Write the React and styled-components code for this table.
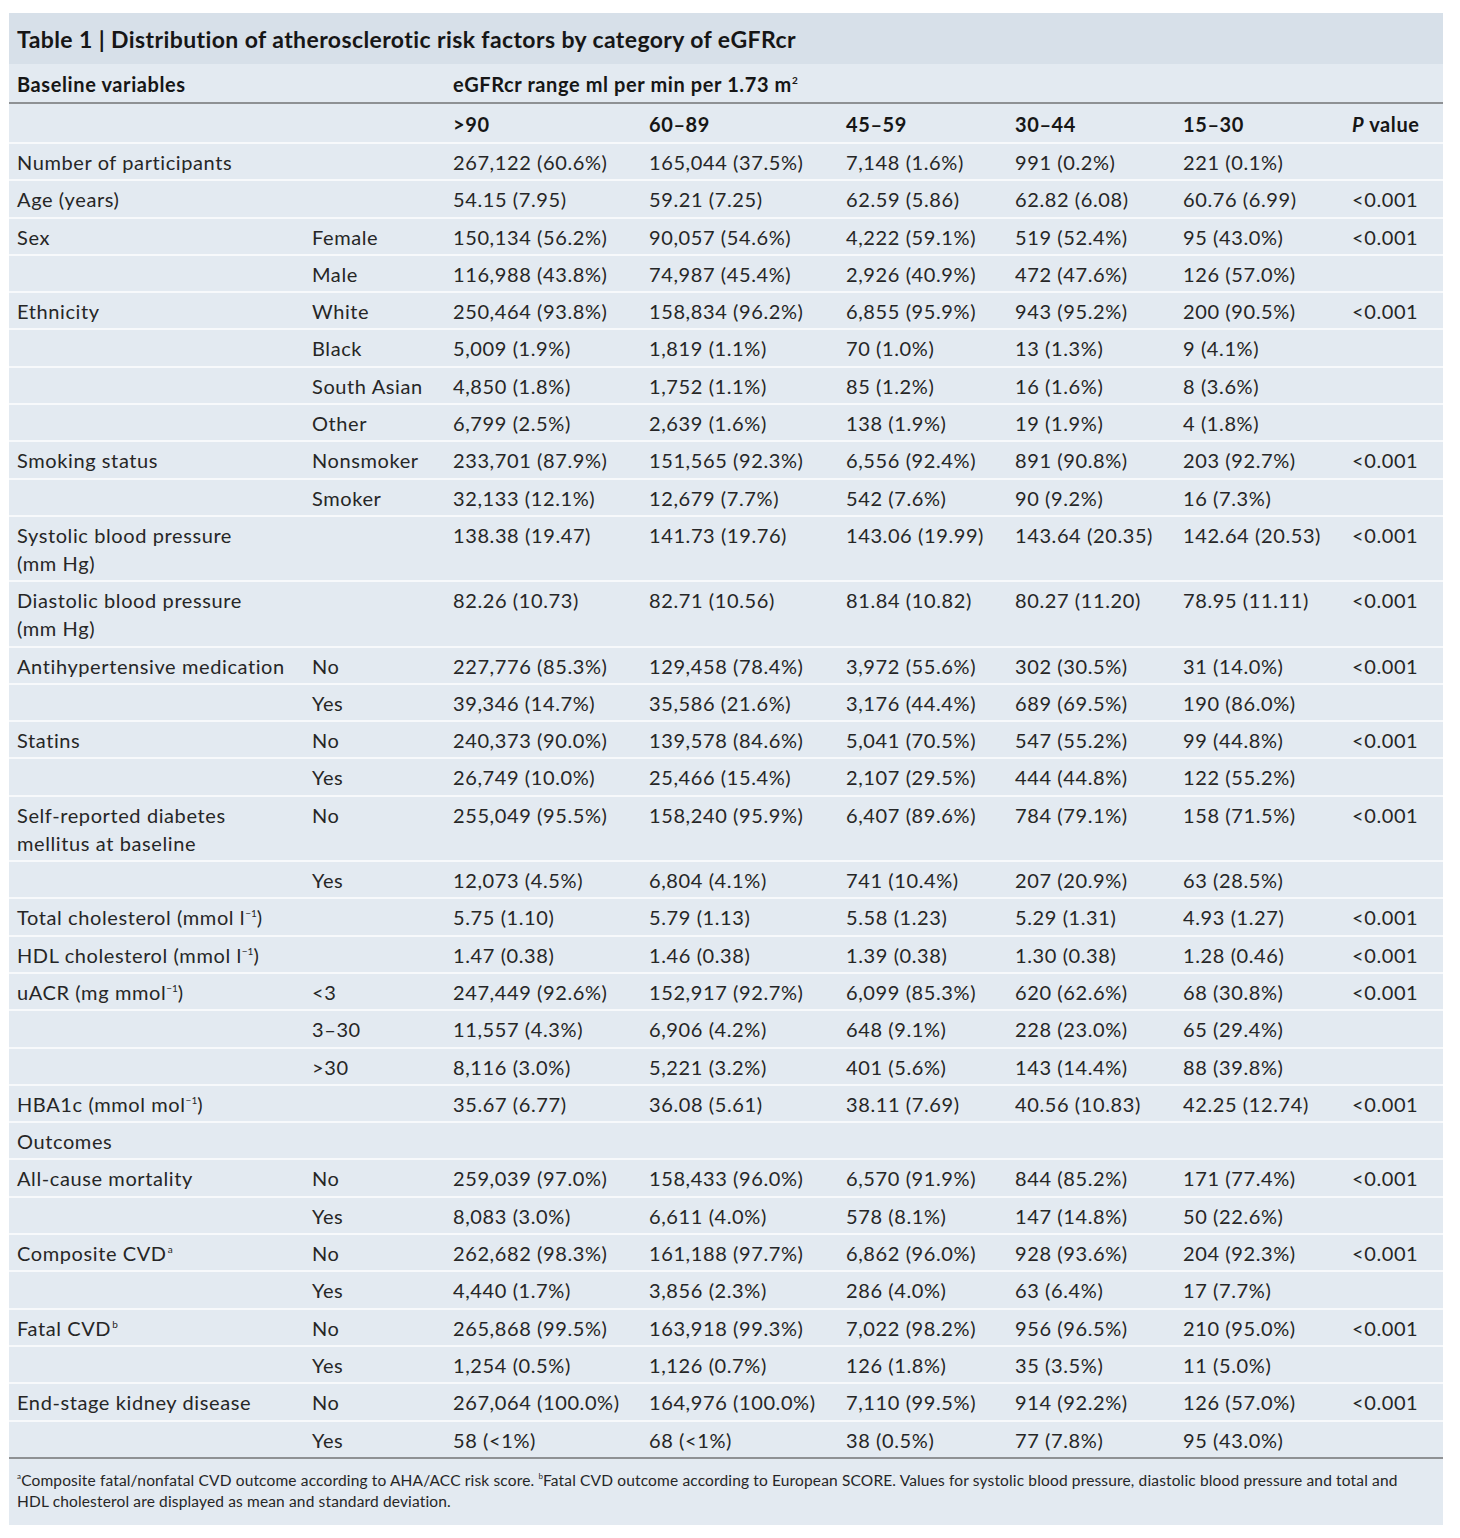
import React from 'react';
import styled, { createGlobalStyle } from 'styled-components';

const GlobalStyle = createGlobalStyle`
  body {
    margin: 0;
    background: #ffffff;
    font-family: Lato, "Open Sans", sans-serif;
    color: #262626;
  }
`;

const COLS = '295px 141px 196px 197px 169px 168px 169px 99px';

const Panel = styled.div`
  width: 1434px;
  margin: 13px 0 0 9px;
  background: #e3eaf1;
`;

const TitleBar = styled.div`
  background: #d7e0e9;
  height: 51px;
  padding: 0 8px;
  display: flex;
  align-items: center;
  font-size: 23px;
  letter-spacing: 0.4px;
  font-weight: 700;
  color: #161616;
`;

const Row = styled.div`
  display: grid;
  grid-template-columns: ${COLS};
  border-top: ${p => (p.$first ? 'none' : p.$rule ? '2px solid #8e9194' : '2px solid #f7f9fb')};
  padding: ${p => (p.$head ? '6px 0 4px' : '4px 0 3.3px')};
  font-weight: ${p => (p.$bold ? 700 : 400)};
  color: ${p => (p.$bold ? '#161616' : '#262626')};
`;

const Cell = styled.div`
  padding-left: 8px;
  font-size: 20px;
  letter-spacing: 0.6px;
  line-height: 28px;
  white-space: nowrap;
  grid-column: ${p => p.$span || 'auto'};
`;

const Sup = styled.sup`
  font-size: 0.5em;
  line-height: 0;
  vertical-align: 0.8em;
  letter-spacing: 0;
  margin-left: ${p => p.$gap || 0};
`;

const Footnote = styled.div`
  border-top: 2px solid #8e9194;
  padding: 11px 24px 13px 8px;
  font-size: 15.5px;
  letter-spacing: 0.15px;
  line-height: 21px;
  color: #262626;
`;

const Mark = styled.span`
  display: inline-block;
  font-size: 8px;
  line-height: 8px;
  vertical-align: top;
  margin-top: 2px;
`;

const unit = (before) => (
  <>
    {before}(mmol l<Sup>−1</Sup>)
  </>
);

const rows = [
  ['Number of participants', '', '267,122 (60.6%)', '165,044 (37.5%)', '7,148 (1.6%)', '991 (0.2%)', '221 (0.1%)', ''],
  ['Age (years)', '', '54.15 (7.95)', '59.21 (7.25)', '62.59 (5.86)', '62.82 (6.08)', '60.76 (6.99)', '<0.001'],
  ['Sex', 'Female', '150,134 (56.2%)', '90,057 (54.6%)', '4,222 (59.1%)', '519 (52.4%)', '95 (43.0%)', '<0.001'],
  ['', 'Male', '116,988 (43.8%)', '74,987 (45.4%)', '2,926 (40.9%)', '472 (47.6%)', '126 (57.0%)', ''],
  ['Ethnicity', 'White', '250,464 (93.8%)', '158,834 (96.2%)', '6,855 (95.9%)', '943 (95.2%)', '200 (90.5%)', '<0.001'],
  ['', 'Black', '5,009 (1.9%)', '1,819 (1.1%)', '70 (1.0%)', '13 (1.3%)', '9 (4.1%)', ''],
  ['', 'South Asian', '4,850 (1.8%)', '1,752 (1.1%)', '85 (1.2%)', '16 (1.6%)', '8 (3.6%)', ''],
  ['', 'Other', '6,799 (2.5%)', '2,639 (1.6%)', '138 (1.9%)', '19 (1.9%)', '4 (1.8%)', ''],
  ['Smoking status', 'Nonsmoker', '233,701 (87.9%)', '151,565 (92.3%)', '6,556 (92.4%)', '891 (90.8%)', '203 (92.7%)', '<0.001'],
  ['', 'Smoker', '32,133 (12.1%)', '12,679 (7.7%)', '542 (7.6%)', '90 (9.2%)', '16 (7.3%)', ''],
  [<>Systolic blood pressure<br />(mm Hg)</>, '', '138.38 (19.47)', '141.73 (19.76)', '143.06 (19.99)', '143.64 (20.35)', '142.64 (20.53)', '<0.001'],
  [<>Diastolic blood pressure<br />(mm Hg)</>, '', '82.26 (10.73)', '82.71 (10.56)', '81.84 (10.82)', '80.27 (11.20)', '78.95 (11.11)', '<0.001'],
  ['Antihypertensive medication', 'No', '227,776 (85.3%)', '129,458 (78.4%)', '3,972 (55.6%)', '302 (30.5%)', '31 (14.0%)', '<0.001'],
  ['', 'Yes', '39,346 (14.7%)', '35,586 (21.6%)', '3,176 (44.4%)', '689 (69.5%)', '190 (86.0%)', ''],
  ['Statins', 'No', '240,373 (90.0%)', '139,578 (84.6%)', '5,041 (70.5%)', '547 (55.2%)', '99 (44.8%)', '<0.001'],
  ['', 'Yes', '26,749 (10.0%)', '25,466 (15.4%)', '2,107 (29.5%)', '444 (44.8%)', '122 (55.2%)', ''],
  [<>Self-reported diabetes<br />mellitus at baseline</>, 'No', '255,049 (95.5%)', '158,240 (95.9%)', '6,407 (89.6%)', '784 (79.1%)', '158 (71.5%)', '<0.001'],
  ['', 'Yes', '12,073 (4.5%)', '6,804 (4.1%)', '741 (10.4%)', '207 (20.9%)', '63 (28.5%)', ''],
  [unit('Total cholesterol '), '', '5.75 (1.10)', '5.79 (1.13)', '5.58 (1.23)', '5.29 (1.31)', '4.93 (1.27)', '<0.001'],
  [unit('HDL cholesterol '), '', '1.47 (0.38)', '1.46 (0.38)', '1.39 (0.38)', '1.30 (0.38)', '1.28 (0.46)', '<0.001'],
  [<>uACR (mg mmol<Sup>−1</Sup>)</>, '<3', '247,449 (92.6%)', '152,917 (92.7%)', '6,099 (85.3%)', '620 (62.6%)', '68 (30.8%)', '<0.001'],
  ['', '3–30', '11,557 (4.3%)', '6,906 (4.2%)', '648 (9.1%)', '228 (23.0%)', '65 (29.4%)', ''],
  ['', '>30', '8,116 (3.0%)', '5,221 (3.2%)', '401 (5.6%)', '143 (14.4%)', '88 (39.8%)', ''],
  [<>HBA1c (mmol mol<Sup>−1</Sup>)</>, '', '35.67 (6.77)', '36.08 (5.61)', '38.11 (7.69)', '40.56 (10.83)', '42.25 (12.74)', '<0.001'],
  ['Outcomes', '', '', '', '', '', '', ''],
  ['All-cause mortality', 'No', '259,039 (97.0%)', '158,433 (96.0%)', '6,570 (91.9%)', '844 (85.2%)', '171 (77.4%)', '<0.001'],
  ['', 'Yes', '8,083 (3.0%)', '6,611 (4.0%)', '578 (8.1%)', '147 (14.8%)', '50 (22.6%)', ''],
  [<>Composite CVD<Sup $gap="1px">a</Sup></>, 'No', '262,682 (98.3%)', '161,188 (97.7%)', '6,862 (96.0%)', '928 (93.6%)', '204 (92.3%)', '<0.001'],
  ['', 'Yes', '4,440 (1.7%)', '3,856 (2.3%)', '286 (4.0%)', '63 (6.4%)', '17 (7.7%)', ''],
  [<>Fatal CVD<Sup $gap="1px">b</Sup></>, 'No', '265,868 (99.5%)', '163,918 (99.3%)', '7,022 (98.2%)', '956 (96.5%)', '210 (95.0%)', '<0.001'],
  ['', 'Yes', '1,254 (0.5%)', '1,126 (0.7%)', '126 (1.8%)', '35 (3.5%)', '11 (5.0%)', ''],
  ['End-stage kidney disease', 'No', '267,064 (100.0%)', '164,976 (100.0%)', '7,110 (99.5%)', '914 (92.2%)', '126 (57.0%)', '<0.001'],
  ['', 'Yes', '58 (<1%)', '68 (<1%)', '38 (0.5%)', '77 (7.8%)', '95 (43.0%)', ''],
];

const ranges = ['>90', '60–89', '45–59', '30–44', '15–30'];

export default function App() {
  return (
    <>
      <GlobalStyle />
      <Panel>
        <TitleBar>Table 1 | Distribution of atherosclerotic risk factors by category of eGFRcr</TitleBar>
        <Row $first $bold $head>
          <Cell $span="1 / 3">Baseline variables</Cell>
          <Cell $span="3 / 9">
            eGFRcr range ml per min per 1.73 m<Sup>2</Sup>
          </Cell>
        </Row>
        <Row $rule $bold $head>
          <Cell />
          <Cell />
          {ranges.map(r => (
            <Cell key={r}>{r}</Cell>
          ))}
          <Cell>
            <i>P</i> value
          </Cell>
        </Row>
        {rows.map((r, i) => (
          <Row key={i}>
            {r.map((c, j) => (
              <Cell key={j}>{c}</Cell>
            ))}
          </Row>
        ))}
        <Footnote>
          <Mark>a</Mark>Composite fatal/nonfatal CVD outcome according to AHA/ACC risk score. <Mark>b</Mark>Fatal CVD
          outcome according to European SCORE. Values for systolic blood pressure, diastolic blood pressure and total and
          HDL cholesterol are displayed as mean and standard deviation.
        </Footnote>
      </Panel>
    </>
  );
}
